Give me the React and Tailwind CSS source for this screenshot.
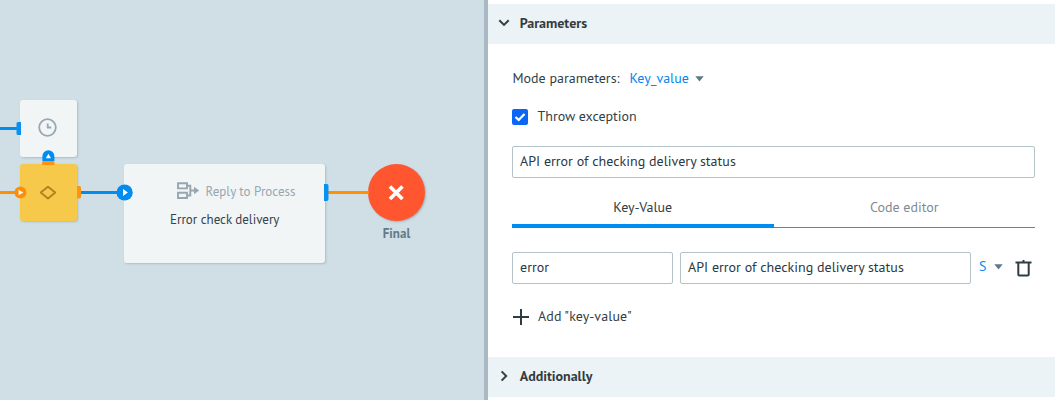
import React from "react";

function Caret() {
  return (
    <svg width="9" height="6" viewBox="0 0 9 6" className="block shrink-0">
      <path d="M0.3 0.3H8.7L4.5 5.4Z" fill="#5f7a8a" />
    </svg>
  );
}

function Field({ className, children }) {
  return (
    <div className={`flex h-8 items-center rounded-[2px] border border-[#b4c2ca] bg-white pl-[7px] pb-[2px] tracking-[0.02px] text-[#2b3942] ${className}`}>
      {children}
    </div>
  );
}

function SectionHeader({ title, open }) {
  return (
    <div className="flex h-10 shrink-0 items-center bg-[#ebf3f6]">
      <svg width="12" height="12" viewBox="0 0 12 12" className="mb-[2px] ml-[10px] mr-[10px] block" fill="none" stroke="#333f47" strokeWidth="2">
        {open ? <path d="M1.3 3.2L6 7.9L10.7 3.2" /> : <path d="M3.6 1.4L8.2 6L3.6 10.6" />}
      </svg>
      <div className="-ml-[0.300px] pb-[2px] font-bold tracking-[-0.02px] text-[#333b41]">{title}</div>
    </div>
  );
}

function Canvas() {
  return (
    <div className="relative h-[400px] w-[484px] shrink-0 overflow-hidden bg-[#d0dfe6]">
      <div className="absolute left-[20px] top-[100px] h-[57px] w-[57px] rounded-[3px] bg-[#f1f5f6] shadow-[1px_1px_2px_rgba(80,110,125,0.3)]" />
      <div className="absolute left-[20px] top-[164px] h-[57px] w-[57px] rounded-[3px] bg-[#f7c94b] shadow-[1px_1px_2px_rgba(80,110,125,0.3)]" />
      <div className="absolute left-[124px] top-[164px] h-[99px] w-[201px] rounded-[3px] bg-[#f1f5f6] shadow-[1px_1px_2px_rgba(80,110,125,0.3)]">
        <div className="mt-[19px] flex h-[18px] items-center whitespace-nowrap pl-[81.500px] text-[13px] tracking-[0.03px] text-[#98a6af]">Reply to Process</div>
        <div className="mt-[10px] flex h-[18px] items-center whitespace-nowrap pl-[46px] text-[13px] text-[#36434b]">Error check delivery</div>
      </div>
      <div className="absolute left-[368px] top-[164px] h-[57px] w-[57px] rounded-full bg-[#ff5630] shadow-[1px_1px_2px_rgba(80,110,125,0.4)]" />
      <div className="absolute left-[368px] top-[225px] w-[57px] text-center text-[13px] font-bold leading-[18px] text-[#627b88]">Final</div>
      <svg width="484" height="400" viewBox="0 0 484 400" className="absolute left-0 top-0" fill="none">
        <path d="M0 128.5H18M80 192.5H120" stroke="#008cf0" strokeWidth="3" />
        <path d="M0 192.5H16M328 192.5H369" stroke="#ff9100" strokeWidth="3" />
        <path d="M21 122H18Q16.500 122 16.500 123.500V133.500Q16.500 135 18 135H21Z" fill="#0a91ef" />
        <path d="M77 186H79.500Q81 186 81 187.500V197Q81 198.500 79.500 198.500H77Z" fill="#ff9412" />
        <path d="M42 165V162.500Q42 161 43.500 161H53Q54.500 161 54.500 162.500V165Z" fill="#ff9412" />
        <path d="M324 184H327Q328.500 184 328.500 186V199Q328.500 201 327 201H324Z" fill="#0a91ef" />
        <path d="M42.400 161V156.300A6 6 0 0 1 54.400 156.300V161Z" fill="#008cf0" />
        <path d="M45.800 158.300L48.400 153.800L51 158.300Z" fill="white" />
        <circle cx="20.400" cy="192.500" r="6" fill="#ff8d08" />
        <path d="M18.600 189.800L23.300 192.500L18.600 195.200Z" fill="white" />
        <circle cx="124.600" cy="192.500" r="8.100" fill="#008cf0" />
        <path d="M123 189L127.900 192.500L123 196Z" fill="white" />
        <circle cx="47.500" cy="127.500" r="8.300" stroke="#98a8b2" strokeWidth="1.800" />
        <path d="M47.700 123.500V127.500H51.200" stroke="#98a8b2" strokeWidth="1.800" />
        <path d="M40.700 192.500L48 186.700L55.300 192.500L48 198.500Z" stroke="#ad8225" strokeWidth="1.800" strokeLinejoin="round" />
        <g stroke="#98a6af" strokeWidth="1.900">
          <path d="M178 183.200H187V188.400H178ZM178 192.800H187V198H178Z" />
          <path d="M187 185.700H190.300V195.500H187M190.300 190.500H195" />
          <path d="M194 186.800L199.200 190.500L194 194.200Z" fill="#98a6af" stroke="none" />
        </g>
        <path d="M391.200 187.800L401.200 197.800M401.200 187.800L391.200 197.800" stroke="white" strokeWidth="3.600" strokeLinecap="square" />
      </svg>
    </div>
  );
}

export default function App() {
  return (
    <div className="flex h-[400px] w-[1055px] overflow-hidden bg-white font-['PT_Sans','Lato',sans-serif] text-[14px] leading-[18px] text-[#333f47]">
      <Canvas />
      <div className="w-1 shrink-0 bg-[#a9b9c3]" />
      <div className="flex w-[567px] shrink-0 flex-col pt-1">
        <SectionHeader title="Parameters" open />
        <div className="flex h-[313px] flex-col pl-6 pr-5">
          <div className="mt-[25px] flex h-[18px] items-center whitespace-nowrap">
            <div className="w-[117.500px] pl-[0.500px]">Mode parameters:</div>
            <div className="w-[65.500px] text-[#0787ee]">Key_value</div>
            <div className="pt-px"><Caret /></div>
          </div>
          <div className="mt-[20px] flex h-[18px] items-center">
            <div className="mt-[2px] flex h-4 w-4 items-center justify-center rounded-[2px] bg-[#0b66f5]">
              <svg width="12" height="12" viewBox="0 0 12 12" fill="none" stroke="white" strokeWidth="2.300">
                <path d="M1.500 6L4.700 9L10.500 3" />
              </svg>
            </div>
            <div className="ml-[9.500px]">Throw exception</div>
          </div>
          <Field className="mt-[21px]">API error of checking delivery status</Field>
          <div className="mt-[20px] grid h-[30px] grid-cols-2 border-b border-[#71818d] text-center">
            <div className="-mb-px border-b-4 border-[#008cf0]">Key-Value</div>
            <div className="text-[#7f8b92]">Code editor</div>
          </div>
          <div className="mt-[24px] flex h-8 items-center">
            <Field className="w-[161px]">error</Field>
            <Field className="ml-[7px] w-[291px]">API error of checking delivery status</Field>
            <div className="ml-[8px] w-[14.500px] pb-[4px] text-[#0787ee]">S</div>
            <div className="pb-[3px]"><Caret /></div>
            <svg width="17" height="18" viewBox="0 0 17 18" className="mb-px ml-[12px] block" fill="none" stroke="#303c44" strokeWidth="2">
              <path d="M0.500 3.500H16.500M8.500 1V3.500M3.300 4V15.500Q3.300 16.500 4.300 16.500H12.700Q13.700 16.500 13.700 15.500V4" />
            </svg>
          </div>
          <div className="mt-[23px] flex h-[18px] items-center">
            <svg width="16" height="16" viewBox="0 0 16 16" className="ml-px mt-px block" stroke="#303c44" strokeWidth="2">
              <path d="M8 0V16M0 8H16" />
            </svg>
            <div className="ml-[9px] tracking-[0.08px]">Add "key-value"</div>
          </div>
        </div>
        <SectionHeader title="Additionally" />
      </div>
    </div>
  );
}
